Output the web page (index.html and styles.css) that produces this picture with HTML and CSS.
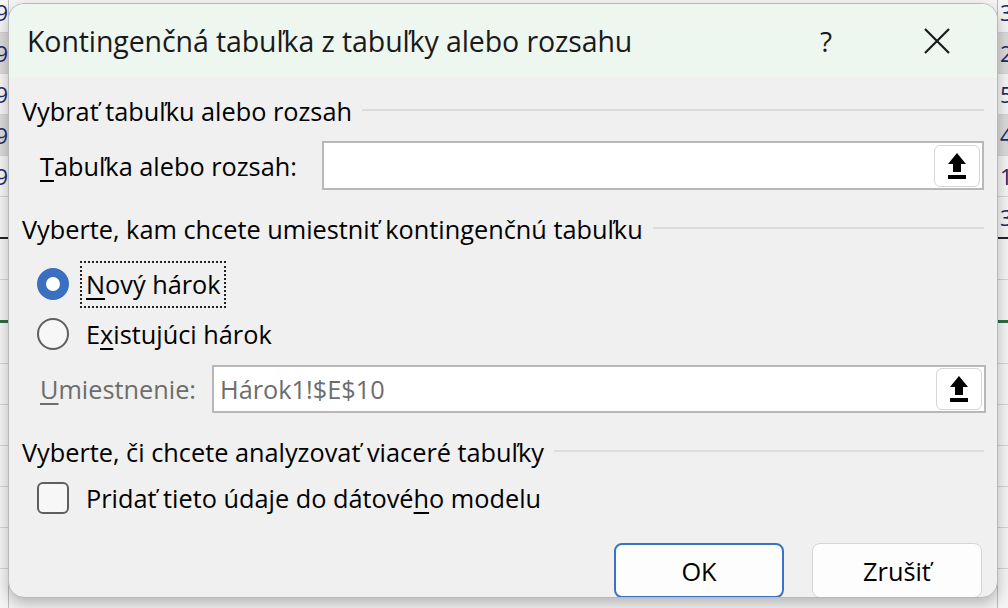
FILE: index.html
```html
<!DOCTYPE html>
<html lang="sk">
<head>
  <meta charset="UTF-8">
  <title>Kontingenčná tabuľka z tabuľky alebo rozsahu</title>
  <link rel="stylesheet" href="styles.css">
</head>
<body>
<div class="sheet">
  <div class="row"><span class="l">9</span><span class="r">32</span></div>
  <div class="row alt"><span class="l">9</span><span class="r">25</span></div>
  <div class="row"><span class="l">9</span><span class="r">53</span></div>
  <div class="row alt"><span class="l">9</span><span class="r">4</span></div>
  <div class="row"><span class="l">9</span><span class="r">17</span></div>
  <div class="row dark"><span class="l"></span><span class="r">32</span></div>
  <div class="row"><span class="l"></span><span class="r"></span></div>
  <div class="row green"><span class="l"></span><span class="r"></span></div>
  <div class="row"><span class="l"></span><span class="r"></span></div>
  <div class="row"><span class="l"></span><span class="r"></span></div>
  <div class="row"><span class="l"></span><span class="r"></span></div>
  <div class="row"><span class="l"></span><span class="r"></span></div>
  <div class="row"><span class="l"></span><span class="r"></span></div>
  <div class="row"><span class="l"></span><span class="r"></span></div>
  <div class="row"><span class="l"></span><span class="r"></span></div>
</div>

<div class="dialog">
  <div class="titlebar">
    <span class="title">Kontingenčná tabuľka z tabuľky alebo rozsahu</span>
    <span class="help">?</span>
    <svg class="close" width="26" height="26" viewBox="0 0 26 26">
      <path d="M1 1 L25 25 M25 1 L1 25" stroke="#1b1b1b" stroke-width="2.2" fill="none"/>
    </svg>
  </div>

  <div class="content">
    <div class="group-head head1"><span>Vybrať tabuľku alebo rozsah</span><i></i></div>

    <div class="field field1">
      <label><u>T</u>abuľka alebo rozsah:</label>
      <div class="refbox">
        <span class="value"></span>
        <button class="pick">
          <svg width="22" height="28" viewBox="0 0 22 28"><path d="M11 1 L2 12 H7 V20 H15 V12 H20 Z" fill="#000"/><rect x="2" y="23" width="18" height="4" fill="#000"/></svg>
        </button>
      </div>
    </div>

    <div class="group-head head2"><span>Vyberte, kam chcete umiestniť kontingenčnú tabuľku</span><i></i></div>

    <div class="option opt1">
      <span class="radio on"></span>
      <span class="focus"><u>N</u>ový hárok</span>
    </div>
    <div class="option opt2">
      <span class="radio"></span>
      <span class="text">E<u>x</u>istujúci hárok</span>
    </div>

    <div class="field field2 disabled">
      <label><u>U</u>miestnenie:</label>
      <div class="refbox">
        <span class="value">Hárok1!$E$10</span>
        <button class="pick">
          <svg width="22" height="28" viewBox="0 0 22 28"><path d="M11 1 L2 12 H7 V20 H15 V12 H20 Z" fill="#000"/><rect x="2" y="23" width="18" height="4" fill="#000"/></svg>
        </button>
      </div>
    </div>

    <div class="group-head head3"><span>Vyberte, či chcete analyzovať viaceré tabuľky</span><i></i></div>

    <div class="option check-row">
      <span class="checkbox"></span>
      <span class="text">Pridať tieto údaje do dátové<u>h</u>o modelu</span>
    </div>

    <div class="buttons">
      <button class="btn primary">OK</button>
      <button class="btn">Zrušiť</button>
    </div>
  </div>
</div>
</body>
</html>
```

FILE: styles.css
```css
body {
  margin: 0;
  width: 1008px;
  height: 608px;
  overflow: hidden;
  background: #c4c4c4;
  font-family: 'Open Sans', 'Noto Sans', sans-serif;
  color: #000;
}

.sheet {
  display: flex;
  flex-direction: column;
  margin-top: -8px;
}

.row {
  display: flex;
  justify-content: space-between;
  height: 40px;
  border-bottom: 1px solid #d2d2d2;
  background: #f4f4f4;
  font-size: 22px;
  line-height: 40px;
  color: #1b2a6b;
}

.row.alt {
  background: #d9d9d9;
}

.row.dark {
  border-bottom: 2px solid #222;
}

.row.green {
  border-bottom: 3px solid #2f6b45;
}

.row .l {
  width: 8px;
  overflow: hidden;
  direction: rtl;
  border-right: 1px solid #bdbdbd;
}

.row .r {
  width: 8px;
  overflow: hidden;
  padding-left: 2px;
  border-left: 1px solid #bdbdbd;
}

.dialog {
  position: absolute;
  left: 8px;
  top: 3px;
  width: 988px;
  height: 593px;
  border: 1px solid #b9b9b9;
  border-radius: 16px;
  background: #f0f0f0;
  overflow: hidden;
  box-shadow: 0 6px 14px rgba(0,0,0,0.25);
}

.titlebar {
  display: flex;
  align-items: center;
  height: 74px;
  background: #eef6f0;
  padding-left: 18px;
}

.title {
  font-size: 28.5px;
  flex: 1;
  color: #1a1a1a;
  letter-spacing: -0.1px;
}

.help {
  font-size: 28px;
  width: 16px;
  margin-right: 88px;
  color: #1a1a1a;
}

.close {
  margin-right: 47px;
}

.content {
  display: flex;
  flex-direction: column;
  padding: 0 13px 0 13px;
  font-size: 25.3px;
}

.group-head {
  display: flex;
  align-items: center;
  height: 28px;
}

.group-head i {
  flex: 1;
  height: 2px;
  background: #dcdcdc;
  margin: 0 0 2px 10px;
}

.head1 { margin-top: 19px; }
.head2 { margin-top: 25px; }
.head3 { margin-top: 25px; }

.field {
  display: flex;
  align-items: center;
  padding-left: 18px;
}

.field1 {
  margin-top: 16px;
  height: 49px;
}

.field1 label {
  width: 282px;
}

.field2 {
  margin-top: 10px;
  height: 48px;
}

.field2 label {
  width: 172px;
}

.field.disabled {
  color: #6d6d6d;
}

.field2 .refbox {
  margin-right: -2px;
}

u {
  text-underline-offset: 4px;
  text-decoration-thickness: 2px;
}

.refbox {
  flex: 1;
  display: flex;
  align-items: center;
  height: 100%;
  box-sizing: border-box;
  border: 2px solid #b8b8b8;
  background: #fff;
  padding: 0 2px 0 6px;
}

.refbox .value {
  flex: 1;
  color: #6d6d6d;
}

.pick {
  width: 46px;
  height: 42px;
  border: 1px solid #d6d6d6;
  border-radius: 6px;
  background: #fff;
  display: flex;
  align-items: center;
  justify-content: center;
  padding: 0;
}

.option {
  display: flex;
  align-items: center;
  height: 42px;
  padding-left: 17px;
}

.opt1 { margin-top: 20px; }
.opt2 { margin-top: 8px; }

.radio {
  width: 32px;
  height: 32px;
  box-sizing: border-box;
  border: 2px solid #5f5f5f;
  border-radius: 50%;
  background: #f7f7f7;
  margin: 0 17px 0 -2px;
}

.radio.on {
  border: 9px solid #3b6fbf;
  background: #fff;
}

.focus {
  outline: 2px dotted #222;
  outline-offset: 0;
  padding: 4px 3px 5px 4px;
  margin-left: -4px;
}

.check-row {
  margin-top: 15px;
  height: 34px;
}

.checkbox {
  width: 32px;
  height: 32px;
  box-sizing: border-box;
  border: 2px solid #5f5f5f;
  border-radius: 6px;
  background: #f7f7f7;
  margin: 0 17px 0 -2px;
}

.buttons {
  display: flex;
  justify-content: flex-end;
  gap: 28px;
  margin-top: 28px;
  padding-right: 2px;
}

.btn {
  width: 170px;
  height: 55px;
  background: #fdfdfd;
  border: 1px solid #d4d4d4;
  border-radius: 8px;
  font-family: 'Open Sans', 'Noto Sans', sans-serif;
  font-size: 25.3px;
  color: #000;
}

.btn.primary {
  border: 2px solid #3b74c4;
}
```
